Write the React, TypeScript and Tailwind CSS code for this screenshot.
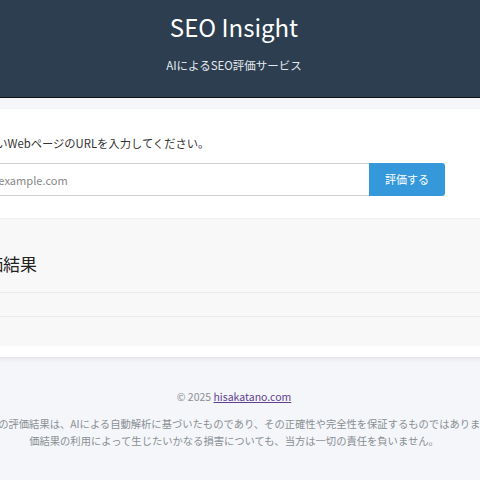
import React from "react";

const App = () => {
  return (
    <div className="min-h-[480px] overflow-hidden bg-[#f4f6f9] font-['Noto_Sans_CJK_JP','Noto_Sans',sans-serif]">
      <header className="h-[98px] border-b border-[#111] bg-[#2c3e50] pr-[12px] flex flex-col items-center">
        <h1 className="mt-[12px] text-[24px] leading-[30px] text-white">SEO Insight</h1>
        <p className="mt-[15px] text-[11.5px] leading-[16px] text-[#e4e9ee]">AIによるSEO評価サービス</p>
      </header>

      <main className="mt-[11px] ml-[-100px] w-[680px] bg-white shadow-[0_2px_4px_rgba(0,0,0,0.08)]">
        <div className="pl-[51px] pt-[26px] pb-[22px]">
          <label className="block text-[11.3px] leading-[16px] text-[#333]">
            評価したいWebページのURLを入力してください。
          </label>
          <div className="mt-[12px] w-[494px] flex">
            <input
              className="flex-1 h-[33px] border border-[#cfcfcf] border-r-0 px-[8px] text-[11.1px] text-[#333] placeholder:text-[#888] outline-none"
              placeholder="https://example.com"
              type="text"
            />
            <button className="w-[76px] h-[33px] rounded-r-[3px] bg-[#3498db] text-[11px] text-white">
              評価する
            </button>
          </div>
        </div>

        <section className="bg-[#f8f8f8] border-t border-[#efefef]">
          <div className="pl-[69px] pt-[33px] pb-[16px] border-b border-[#ececec]">
            <h2 className="text-[17px] leading-[24px] text-[#222]">評価結果</h2>
          </div>
          <div className="h-[24px] border-b border-[#ececec]" />
          <div className="h-[29px]" />
        </section>
        <div className="h-[11px]" />
      </main>

      <footer className="mt-[32px] ml-[-66px] w-[600px] text-center text-[#8a8f94]">
        <p className="text-[10.5px] leading-[16px]">
          © 2025{" "}
          <a className="text-[#5f3f91] underline" href="#">
            hisakatano.com
          </a>
        </p>
        <p className="mt-[10px] whitespace-nowrap text-[10.3px] leading-[17px]">
          本サービスの評価結果は、AIによる自動解析に基づいたものであり、その正確性や完全性を保証するものではありません。評
          <br />
          価結果の利用によって生じたいかなる損害についても、当方は一切の責任を負いません。
        </p>
      </footer>
    </div>
  );
};

export default App;
